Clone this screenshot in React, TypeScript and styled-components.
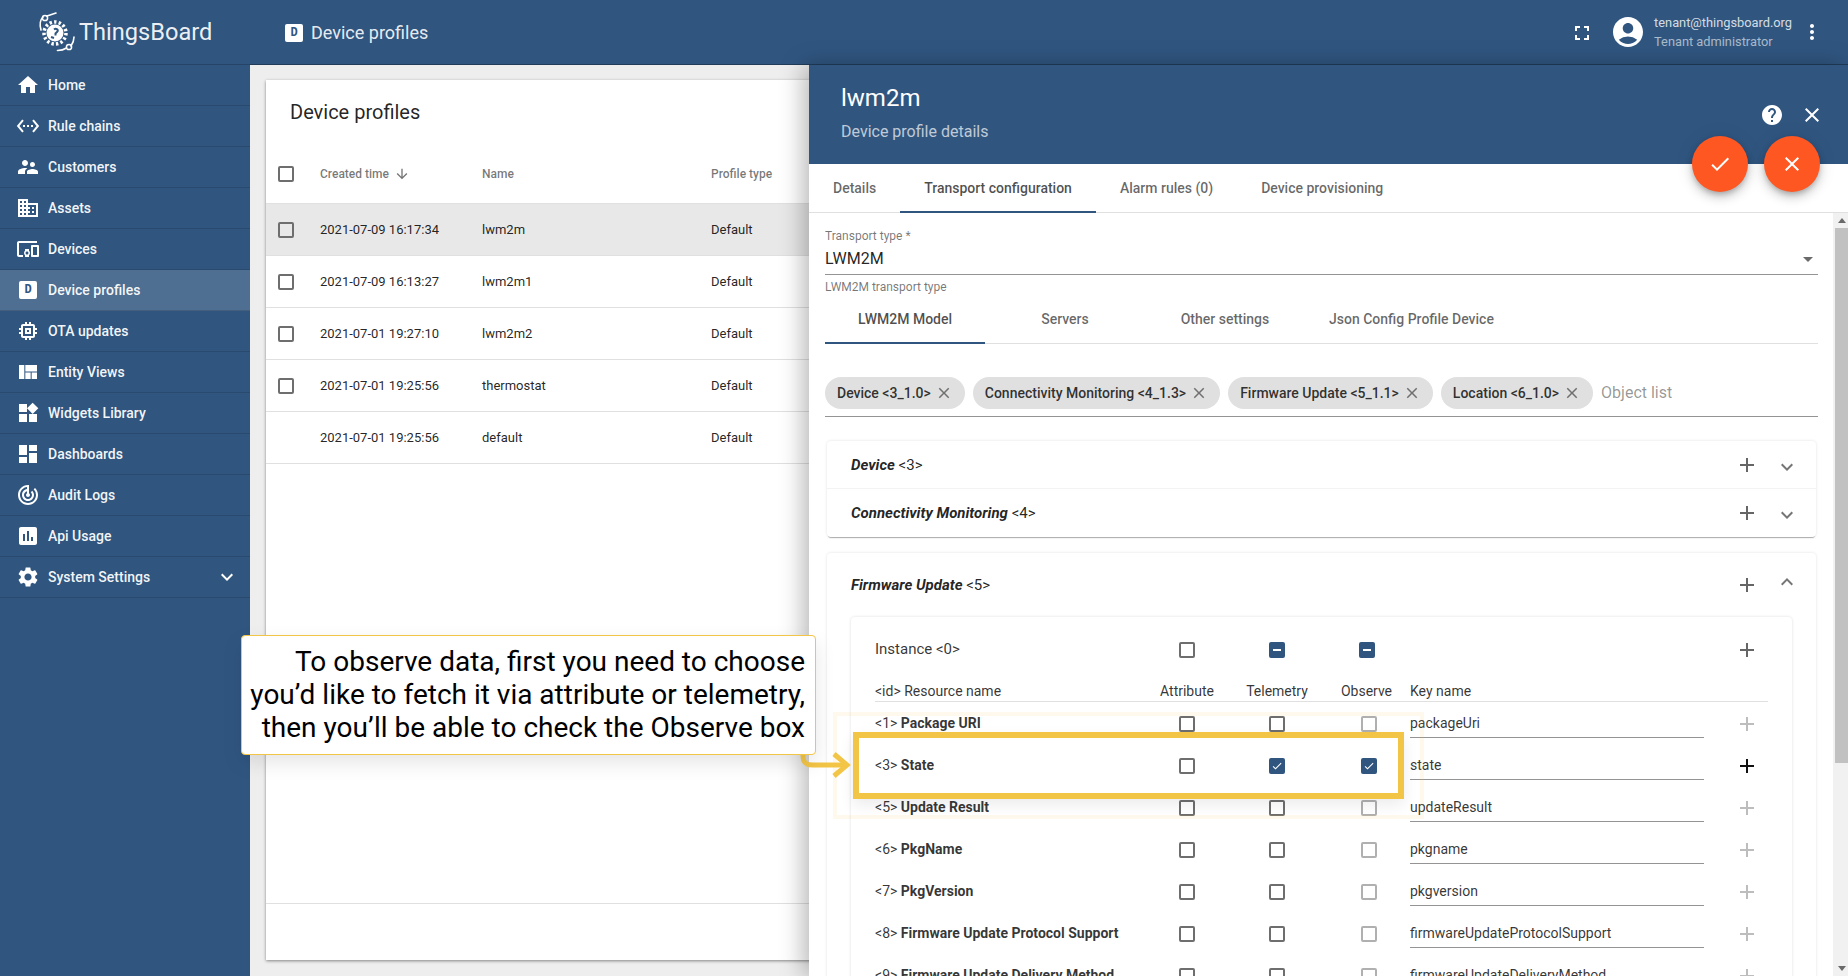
import styled, { createGlobalStyle } from "styled-components";
import type { ReactNode } from "react";
import {
  MdAccountCircle,
  MdAdd,
  MdArrowDownward,
  MdCheck,
  MdClose,
  MdDashboard,
  MdDevicesOther,
  MdDomain,
  MdFullscreen,
  MdHelp,
  MdHome,
  MdInsertChart,
  MdKeyboardArrowDown,
  MdKeyboardArrowUp,
  MdMemory,
  MdMoreVert,
  MdSettings,
  MdSettingsEthernet,
  MdSupervisorAccount,
  MdTrackChanges,
  MdViewQuilt,
  MdWidgets,
} from "react-icons/md";

const primary = "#305680";
const accent = "#f3c546";

const GlobalStyle = createGlobalStyle`
  html, body {
    margin: 0;
    padding: 0;
    height: 100%;
    overflow: hidden;
    font-family: Roboto, "Liberation Sans", sans-serif;
    font-size: 14px;
    color: rgba(0, 0, 0, 0.87);
  }
  * {
    box-sizing: border-box;
  }
`;

const Page = styled.div`
  position: relative;
  display: flex;
  width: 100%;
  height: 100vh;
  overflow: hidden;
`;

const Sidebar = styled.aside`
  width: 250px;
  flex-shrink: 0;
  display: flex;
  flex-direction: column;
  background-color: ${primary};
  z-index: 2;
`;

const LogoBar = styled.div`
  height: 65px;
  display: flex;
  align-items: center;
  gap: 1px;
  padding: 0 0 1px 36px;
  border-bottom: 1px solid rgba(0, 0, 0, 0.2);
  color: rgba(255, 255, 255, 0.92);
  font-size: 23.6px;
`;

const NavItem = styled.div<{ $active?: boolean }>`
  height: 41px;
  display: flex;
  align-items: center;
  gap: 8px;
  padding: 0 11px 0 16px;
  border-bottom: 1px solid rgba(0, 0, 0, 0.14);
  font-size: 14px;
  font-weight: 500;
  color: rgba(255, 255, 255, 0.95);
  background-color: ${(props) => (props.$active ? "#4f6f92" : "transparent")};
`;

const NavLabel = styled.span`
  flex: 1;
`;

const IconSlot = styled.span`
  width: 24px;
  height: 24px;
  display: flex;
  align-items: center;
  justify-content: center;
  flex-shrink: 0;
  font-size: 24px;
  color: #fff;
`;

const ProfileBadge = styled.span`
  width: 18px;
  height: 18px;
  display: flex;
  align-items: center;
  justify-content: center;
  border-radius: 2px;
  background-color: #fff;
  color: ${primary};
  font-family: "Liberation Mono", monospace;
  font-size: 12px;
  font-weight: 700;
`;

const Main = styled.main`
  position: relative;
  flex: 1;
  min-width: 0;
  display: flex;
  flex-direction: column;
  background-color: #eeeeee;
`;

const Toolbar = styled.header`
  height: 65px;
  flex-shrink: 0;
  display: flex;
  align-items: center;
  padding: 0 24px 1px 35px;
  background-color: ${primary};
  border-bottom: 1px solid rgba(0, 0, 0, 0.3);
  color: #fff;
`;

const PageTitle = styled.div`
  flex: 1;
  display: flex;
  align-items: center;
  gap: 8px;
  padding-top: 2px;
  font-size: 18px;
  color: rgba(255, 255, 255, 0.9);
`;

const ToolbarIcon = styled.span<{ $size?: number }>`
  display: flex;
  font-size: ${(props) => props.$size ?? 24}px;
  color: #fff;
`;

const FullscreenIcon = styled(ToolbarIcon)`
  margin-top: 2px;
`;

const UserBlock = styled.div`
  display: flex;
  align-items: center;
  margin: 0 8px 0 16px;
  gap: 8px;
`;

const UserText = styled.div`
  display: flex;
  flex-direction: column;
  gap: 4px;
  font-size: 12.8px;
  line-height: 15px;
`;

const UserMail = styled.span`
  color: rgba(255, 255, 255, 0.8);
`;

const UserRole = styled.span`
  color: rgba(255, 255, 255, 0.6);
`;

const Content = styled.div`
  flex: 1;
  min-height: 0;
  display: flex;
  padding: 15px 16px 16px;
`;

const Card = styled.section`
  flex: 1;
  display: flex;
  flex-direction: column;
  background-color: #fff;
  box-shadow: 0 1px 3px rgba(0, 0, 0, 0.45);
`;

const CardTitle = styled.h1`
  margin: 0;
  height: 60px;
  padding: 19px 0 0 24px;
  font-size: 20px;
  line-height: 26px;
  font-weight: 400;
`;

const TableRow = styled.div<{ $head?: boolean; $selected?: boolean }>`
  height: ${(props) => (props.$head ? 64 : 52)}px;
  flex-shrink: 0;
  display: grid;
  grid-template-columns: 54px 162px 229px 1fr;
  align-items: center;
  padding-top: ${(props) => (props.$head ? 4 : 0)}px;
  border-bottom: 1px solid #e0e0e0;
  font-size: ${(props) => (props.$head ? "12px" : "13px")};
  font-weight: ${(props) => (props.$head ? 500 : 400)};
  color: ${(props) => (props.$head ? "rgba(0,0,0,0.54)" : "rgba(0,0,0,0.87)")};
  background-color: ${(props) => (props.$selected ? "#e8e8e8" : "transparent")};
`;

const SelectCell = styled.div`
  padding-left: 12px;
  display: flex;
`;

const SortCell = styled.div`
  display: flex;
  align-items: center;
  gap: 5px;
  font-size: 12px;
`;

const TableSpace = styled.div`
  flex: 1;
`;

const TableFooter = styled.div`
  height: 57px;
  border-top: 1px solid #e0e0e0;
`;

const Box = styled.span<{ $muted?: boolean; $filled?: boolean }>`
  width: 16px;
  height: 16px;
  flex-shrink: 0;
  display: flex;
  align-items: center;
  justify-content: center;
  border-radius: 2px;
  border: 2px solid ${(props) => (props.$filled ? primary : props.$muted ? "#b0b0b0" : "#6e6e6e")};
  background-color: ${(props) => (props.$filled ? primary : "transparent")};
  color: #fff;
  font-size: 14px;
`;

const Dash = styled.span`
  width: 8px;
  height: 2px;
  background-color: #fff;
`;

const Drawer = styled.div`
  position: absolute;
  top: 65px;
  right: 0;
  bottom: 0;
  width: 1039px;
  display: flex;
  flex-direction: column;
  background-color: #fff;
  box-shadow: -6px 0 22px rgba(0, 0, 0, 0.28);
`;

const DrawerHead = styled.div`
  height: 99px;
  flex-shrink: 0;
  display: flex;
  justify-content: space-between;
  padding: 17px 24px 0 32px;
  background-color: ${primary};
  color: #fff;
`;

const DrawerTitle = styled.div`
  font-size: 24px;
  line-height: 32px;
`;

const DrawerSub = styled.div`
  margin-top: 6px;
  font-size: 16px;
  line-height: 24px;
  color: rgba(255, 255, 255, 0.7);
`;

const HeadActions = styled.div`
  display: flex;
  gap: 16px;
  padding-top: 21px;
`;

const FabRow = styled.div`
  position: absolute;
  top: 71px;
  right: 28px;
  display: flex;
  gap: 16px;
`;

const Fab = styled.div`
  width: 56px;
  height: 56px;
  border-radius: 50%;
  display: flex;
  align-items: center;
  justify-content: center;
  background-color: #ff5722;
  color: #fff;
  font-size: 24px;
  box-shadow: 0 3px 5px -1px rgba(0, 0, 0, 0.2), 0 6px 10px rgba(0, 0, 0, 0.14), 0 1px 18px rgba(0, 0, 0, 0.12);
`;

const TabBar = styled.div<{ $inner?: boolean }>`
  height: ${(props) => (props.$inner ? 48 : 49)}px;
  flex-shrink: 0;
  display: flex;
  border-bottom: 1px solid #e0e0e0;
`;

const Tab = styled.div<{ $active?: boolean; $wide?: boolean }>`
  min-width: ${(props) => (props.$wide ? 160 : 0)}px;
  padding: 0 24px;
  display: flex;
  align-items: center;
  justify-content: center;
  font-size: 14px;
  font-weight: 500;
  color: ${(props) => (props.$active ? "rgba(0,0,0,0.7)" : "rgba(0,0,0,0.6)")};
  border-bottom: 2px solid ${(props) => (props.$active ? primary : "transparent")};
  margin-bottom: -1px;
`;

const DrawerBody = styled.div`
  flex: 1;
  min-height: 0;
  display: flex;
`;

const Scroller = styled.div`
  flex: 1;
  min-width: 0;
  overflow: hidden;
  padding: 0 15px 0 16px;
`;

const Scrollbar = styled.div`
  width: 15px;
  flex-shrink: 0;
  display: flex;
  flex-direction: column;
  align-items: flex-end;
  background-color: #f1f1f1;
`;

const ScrollArrow = styled.span<{ $down?: boolean }>`
  width: 13px;
  height: 15px;
  display: flex;
  align-items: center;
  justify-content: center;
  &::before {
    content: "";
    border-left: 4px solid transparent;
    border-right: 4px solid transparent;
    ${(props) => (props.$down ? "border-top" : "border-bottom")}: 5px solid #6a6a6a;
  }
`;

const ScrollThumb = styled.div`
  width: 13px;
  height: 535px;
  background-color: #c1c1c1;
`;

const ScrollSpace = styled.div`
  flex: 1;
`;

const SelectField = styled.div`
  height: 62px;
  padding-top: 16px;
  border-bottom: 1px solid #949494;
  position: relative;
`;

const SelectLabel = styled.div`
  font-size: 12px;
  line-height: 15px;
  color: rgba(0, 0, 0, 0.54);
`;

const SelectValue = styled.div`
  display: flex;
  align-items: center;
  justify-content: space-between;
  margin-top: 4px;
  padding-right: 5px;
  font-size: 16px;
  line-height: 22px;
  &::after {
    content: "";
    border-left: 5px solid transparent;
    border-right: 5px solid transparent;
    border-top: 5px solid #6a6a6a;
  }
`;

const Hint = styled.div`
  margin-top: 5px;
  height: 16px;
  font-size: 12px;
  line-height: 15px;
  color: rgba(0, 0, 0, 0.54);
`;

const ChipField = styled.div`
  margin-top: 33px;
  height: 40px;
  display: flex;
  align-items: flex-start;
  gap: 8px;
  border-bottom: 1px solid #949494;
`;

const Chip = styled.div`
  height: 32px;
  display: flex;
  align-items: center;
  gap: 4px;
  padding: 0 12px 0 12px;
  border-radius: 16px;
  background-color: #e0e0e0;
  font-size: 14px;
  font-weight: 500;
  color: rgba(0, 0, 0, 0.8);
`;

const ChipClose = styled.span`
  display: flex;
  font-size: 18px;
  color: rgba(0, 0, 0, 0.5);
`;

const ChipPlaceholder = styled.div`
  height: 31px;
  display: flex;
  align-items: center;
  font-size: 16px;
  color: rgba(0, 0, 0, 0.42);
`;

const PanelGroup = styled.div<{ $first?: boolean }>`
  margin: ${(props) => (props.$first ? "24px" : "16px")} 2px 0;
  border-radius: 4px;
  background-color: #fff;
  box-shadow: 0 2px 1px -1px rgba(0, 0, 0, 0.3), 0 0 3px rgba(0, 0, 0, 0.12);
`;

const PanelHead = styled.div<{ $tall?: boolean; $rule?: boolean }>`
  height: ${(props) => (props.$tall ? 64 : 48)}px;
  display: flex;
  align-items: center;
  padding: 0 17px 0 24px;
  border-bottom: ${(props) => (props.$rule ? "1px solid #f3f3f3" : "0")};
`;

const PanelName = styled.span`
  flex: 1;
  font-size: 15px;
  line-height: 16px;
  color: rgba(0, 0, 0, 0.87);
  em {
    font-weight: 700;
    font-style: italic;
  }
`;

const AddIcon = styled.span<{ $tone?: "off" | "on" }>`
  width: 24px;
  height: 24px;
  display: flex;
  font-size: 24px;
  color: ${(props) =>
    props.$tone === "off" ? "rgba(0,0,0,0.26)" : props.$tone === "on" ? "#111" : "rgba(0,0,0,0.6)"};
`;

const Chevron = styled.span<{ $up?: boolean }>`
  width: 24px;
  display: flex;
  margin: ${(props) => (props.$up ? "-6px 0 0 16px" : "4px 0 0 16px")};
  font-size: 24px;
  color: rgba(0, 0, 0, 0.54);
`;

const InnerCard = styled.div`
  margin: 0 24px;
  padding: 8px 24px 0;
  border-radius: 4px;
  box-shadow: 0 0 3px rgba(0, 0, 0, 0.14);
`;

const ResourceRow = styled.div<{ $kind?: "instance" | "head" }>`
  display: grid;
  grid-template-columns: 268px 88px 92px 87px 294px 1fr;
  align-items: ${(props) => (props.$kind === "head" ? "end" : "center")};
  height: ${(props) => (props.$kind === "instance" ? 48 : props.$kind === "head" ? 29 : 42)}px;
  padding-bottom: ${(props) => (props.$kind === "head" ? 2 : 0)}px;
  border-bottom: ${(props) => (props.$kind === "head" ? "1px solid #e0e0e0" : "0")};
  font-size: ${(props) => (props.$kind === "instance" ? 15 : 14)}px;
  line-height: 16px;
  color: rgba(0, 0, 0, 0.8);
  b {
    font-weight: 700;
  }
`;

const Centered = styled.div<{ $shift?: number }>`
  display: flex;
  justify-content: center;
  padding-left: ${(props) => props.$shift ?? 0}px;
  padding-top: 2px;
`;

const HeadCaption = styled.div`
  text-align: center;
  white-space: nowrap;
`;

const KeyField = styled.div`
  align-self: start;
  height: 36px;
  padding-top: 13px;
  border-bottom: 1px solid #949494;
`;

const AddCell = styled.div`
  display: flex;
  justify-content: flex-end;
  padding: 2px 9px 0 0;
`;

const Callout = styled.div`
  position: absolute;
  left: 241px;
  top: 635px;
  width: 575px;
  height: 120px;
  padding: 9px 10px 0 0;
  border: 1px solid ${accent};
  border-radius: 4px;
  background-color: #fff;
  box-shadow: 0 8px 20px rgba(0, 0, 0, 0.1);
  text-align: right;
  font-size: 28px;
  line-height: 33px;
  color: #000;
  white-space: nowrap;
  z-index: 5;
`;

const Highlight = styled.div`
  position: absolute;
  left: 853px;
  top: 732px;
  width: 551px;
  height: 67px;
  border: 6px solid ${accent};
  box-shadow: 0 6px 14px rgba(0, 0, 0, 0.08);
  z-index: 4;
`;

const HighlightHalo = styled.div`
  position: absolute;
  left: 833px;
  top: 712px;
  width: 591px;
  height: 107px;
  border: 4px solid rgba(243, 197, 70, 0.1);
  z-index: 3;
`;

const PointerArrow = styled.svg`
  position: absolute;
  left: 798px;
  top: 752px;
  z-index: 4;
`;

function Logo() {
  return (
    <svg width="42" height="46" viewBox="0 0 42 46" fill="none">
      <circle cx="19" cy="24" r="8.5" fill="#fff" />
      <circle cx="19" cy="24" r="11" stroke="#fff" strokeWidth="3.5" strokeDasharray="2.4 2.2" />
      <path d="M18 20.5c2-1.5 4.5 0 3.5 2l-2 2v2M15 28l3 1" stroke={primary} strokeWidth="2" />
      <circle cx="9" cy="9" r="2.6" stroke="#fff" strokeWidth="1.5" />
      <path d="M5 21C3 14 5 10 7 8M11 7c3-1 6-2 9-3" stroke="#fff" strokeWidth="1.6" strokeLinecap="round" />
      <circle cx="33" cy="38" r="2.6" stroke="#fff" strokeWidth="1.5" />
      <path d="M35 37c2-3 3-6 3-9M30.500 39c-3 2-6 2.500-9 2.500" stroke="#fff" strokeWidth="1.6" strokeLinecap="round" />
    </svg>
  );
}

interface NavEntry {
  label: string;
  icon: ReactNode;
  active?: boolean;
  more?: boolean;
}

const navEntries: NavEntry[] = [
  { label: "Home", icon: <MdHome /> },
  { label: "Rule chains", icon: <MdSettingsEthernet /> },
  { label: "Customers", icon: <MdSupervisorAccount /> },
  { label: "Assets", icon: <MdDomain /> },
  { label: "Devices", icon: <MdDevicesOther /> },
  { label: "Device profiles", icon: <ProfileBadge>D</ProfileBadge>, active: true },
  { label: "OTA updates", icon: <MdMemory /> },
  { label: "Entity Views", icon: <MdViewQuilt /> },
  { label: "Widgets Library", icon: <MdWidgets /> },
  { label: "Dashboards", icon: <MdDashboard /> },
  { label: "Audit Logs", icon: <MdTrackChanges /> },
  { label: "Api Usage", icon: <MdInsertChart /> },
  { label: "System Settings", icon: <MdSettings />, more: true },
];

const profiles = [
  { time: "2021-07-09 16:17:34", name: "lwm2m", box: true, selected: true },
  { time: "2021-07-09 16:13:27", name: "lwm2m1", box: true },
  { time: "2021-07-01 19:27:10", name: "lwm2m2", box: true },
  { time: "2021-07-01 19:25:56", name: "thermostat", box: true },
  { time: "2021-07-01 19:25:56", name: "default", box: false },
];

const chips = ["Device <3_1.0>", "Connectivity Monitoring <4_1.3>", "Firmware Update <5_1.1>", "Location <6_1.0>"];

const resources = [
  { id: 1, name: "Package URI", key: "packageUri" },
  { id: 3, name: "State", key: "state", on: true },
  { id: 5, name: "Update Result", key: "updateResult" },
  { id: 6, name: "PkgName", key: "pkgname" },
  { id: 7, name: "PkgVersion", key: "pkgversion" },
  { id: 8, name: "Firmware Update Protocol Support", key: "firmwareUpdateProtocolSupport" },
  { id: 9, name: "Firmware Update Delivery Method", key: "firmwareUpdateDeliveryMethod" },
];

function App() {
  return (
    <Page>
      <GlobalStyle />
      <Sidebar>
        <LogoBar>
          <Logo />
          ThingsBoard
        </LogoBar>
        {navEntries.map((entry) => (
          <NavItem key={entry.label} $active={entry.active}>
            <IconSlot>{entry.icon}</IconSlot>
            <NavLabel>{entry.label}</NavLabel>
            {entry.more && (
              <IconSlot>
                <MdKeyboardArrowDown />
              </IconSlot>
            )}
          </NavItem>
        ))}
      </Sidebar>

      <Main>
        <Toolbar>
          <PageTitle>
            <ProfileBadge>D</ProfileBadge>
            Device profiles
          </PageTitle>
          <FullscreenIcon>
            <MdFullscreen />
          </FullscreenIcon>
          <UserBlock>
            <ToolbarIcon $size={36}>
              <MdAccountCircle />
            </ToolbarIcon>
            <UserText>
              <UserMail>tenant@thingsboard.org</UserMail>
              <UserRole>Tenant administrator</UserRole>
            </UserText>
          </UserBlock>
          <ToolbarIcon>
            <MdMoreVert />
          </ToolbarIcon>
        </Toolbar>

        <Content>
          <Card>
            <CardTitle>Device profiles</CardTitle>
            <TableRow $head>
              <SelectCell>
                <Box />
              </SelectCell>
              <SortCell>
                Created time
                <MdArrowDownward size={16} />
              </SortCell>
              <div>Name</div>
              <div>Profile type</div>
            </TableRow>
            {profiles.map((row) => (
              <TableRow key={row.name} $selected={row.selected}>
                <SelectCell>{row.box && <Box />}</SelectCell>
                <div>{row.time}</div>
                <div>{row.name}</div>
                <div>Default</div>
              </TableRow>
            ))}
            <TableSpace />
            <TableFooter />
          </Card>
        </Content>

        <Drawer>
          <DrawerHead>
            <div>
              <DrawerTitle>lwm2m</DrawerTitle>
              <DrawerSub>Device profile details</DrawerSub>
            </div>
            <HeadActions>
              <ToolbarIcon>
                <MdHelp />
              </ToolbarIcon>
              <ToolbarIcon>
                <MdClose />
              </ToolbarIcon>
            </HeadActions>
          </DrawerHead>
          <FabRow>
            <Fab>
              <MdCheck />
            </Fab>
            <Fab>
              <MdClose />
            </Fab>
          </FabRow>
          <TabBar>
            <Tab>Details</Tab>
            <Tab $active>Transport configuration</Tab>
            <Tab>Alarm rules (0)</Tab>
            <Tab>Device provisioning</Tab>
          </TabBar>

          <DrawerBody>
            <Scroller>
              <SelectField>
                <SelectLabel>Transport type *</SelectLabel>
                <SelectValue>LWM2M</SelectValue>
              </SelectField>
              <Hint>LWM2M transport type</Hint>
              <TabBar $inner>
                <Tab $wide $active>
                  LWM2M Model
                </Tab>
                <Tab $wide>Servers</Tab>
                <Tab $wide>Other settings</Tab>
                <Tab $wide>Json Config Profile Device</Tab>
              </TabBar>

              <ChipField>
                {chips.map((chip) => (
                  <Chip key={chip}>
                    {chip}
                    <ChipClose>
                      <MdClose />
                    </ChipClose>
                  </Chip>
                ))}
                <ChipPlaceholder>Object list</ChipPlaceholder>
              </ChipField>

              <PanelGroup $first>
                <PanelHead $rule>
                  <PanelName>
                    <em>Device</em> &lt;3&gt;
                  </PanelName>
                  <AddIcon>
                    <MdAdd />
                  </AddIcon>
                  <Chevron>
                    <MdKeyboardArrowDown />
                  </Chevron>
                </PanelHead>
                <PanelHead>
                  <PanelName>
                    <em>Connectivity Monitoring</em> &lt;4&gt;
                  </PanelName>
                  <AddIcon>
                    <MdAdd />
                  </AddIcon>
                  <Chevron>
                    <MdKeyboardArrowDown />
                  </Chevron>
                </PanelHead>
              </PanelGroup>

              <PanelGroup>
                <PanelHead $tall>
                  <PanelName>
                    <em>Firmware Update</em> &lt;5&gt;
                  </PanelName>
                  <AddIcon>
                    <MdAdd />
                  </AddIcon>
                  <Chevron $up>
                    <MdKeyboardArrowUp />
                  </Chevron>
                </PanelHead>
                <InnerCard>
                  <ResourceRow $kind="instance">
                    <div>Instance &lt;0&gt;</div>
                    <Centered>
                      <Box />
                    </Centered>
                    <Centered>
                      <Box $filled>
                        <Dash />
                      </Box>
                    </Centered>
                    <Centered>
                      <Box $filled>
                        <Dash />
                      </Box>
                    </Centered>
                    <div />
                    <AddCell>
                      <AddIcon>
                        <MdAdd />
                      </AddIcon>
                    </AddCell>
                  </ResourceRow>
                  <ResourceRow $kind="head">
                    <div>&lt;id&gt; Resource name</div>
                    <HeadCaption>Attribute</HeadCaption>
                    <HeadCaption>Telemetry</HeadCaption>
                    <HeadCaption>Observe</HeadCaption>
                    <div>Key name</div>
                    <div />
                  </ResourceRow>
                  {resources.map((item) => (
                    <ResourceRow key={item.id}>
                      <div>
                        &lt;{item.id}&gt; <b>{item.name}</b>
                      </div>
                      <Centered>
                        <Box />
                      </Centered>
                      <Centered>
                        <Box $filled={item.on}>{item.on && <MdCheck />}</Box>
                      </Centered>
                      <Centered $shift={5}>
                        <Box $filled={item.on} $muted={!item.on}>
                          {item.on && <MdCheck />}
                        </Box>
                      </Centered>
                      <KeyField>{item.key}</KeyField>
                      <AddCell>
                        <AddIcon $tone={item.on ? "on" : "off"}>
                          <MdAdd />
                        </AddIcon>
                      </AddCell>
                    </ResourceRow>
                  ))}
                </InnerCard>
              </PanelGroup>
            </Scroller>
            <Scrollbar>
              <ScrollArrow />
              <ScrollThumb />
              <ScrollSpace />
              <ScrollArrow $down />
            </Scrollbar>
          </DrawerBody>
        </Drawer>
      </Main>

      <HighlightHalo />
      <Highlight />
      <PointerArrow width="56" height="26" viewBox="0 0 56 26" fill="none">
        <path d="M5 2v2c0 7 3 9 10 9h34" stroke={accent} strokeWidth="5" />
        <path d="M36 2l13 11-13 11" stroke={accent} strokeWidth="5" />
      </PointerArrow>
      <Callout>
        To observe data, first you need to choose
        <br />
        you’d like to fetch it via attribute or telemetry,
        <br />
        then you’ll be able to check the Observe box
      </Callout>
    </Page>
  );
}

export default App;
